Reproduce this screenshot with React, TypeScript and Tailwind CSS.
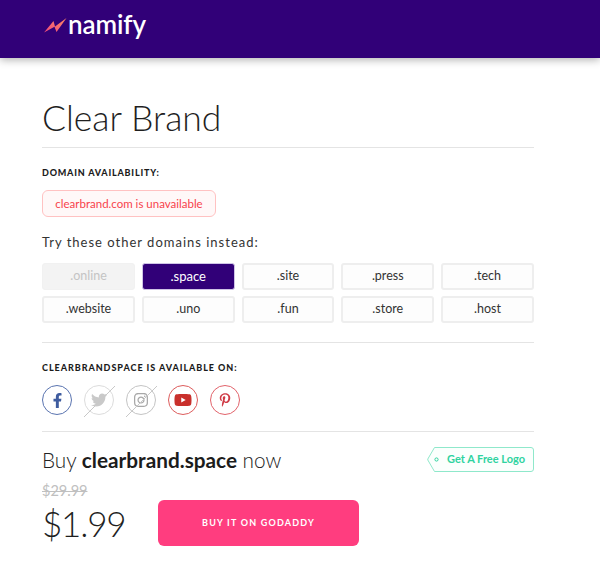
import { FaFacebookF, FaInstagram, FaPinterestP, FaTwitter, FaYoutube } from "react-icons/fa";

const domains = [".online", ".space", ".site", ".press", ".tech", ".website", ".uno", ".fun", ".store", ".host"];

const socials = [
  { name: "facebook", Icon: FaFacebookF, ring: "border-[#5a74b0]", color: "text-[#3f5c9f]", size: 15, taken: false },
  { name: "twitter", Icon: FaTwitter, ring: "border-[#dcdcdc]", color: "text-[#c9c9c9]", size: 16, taken: true },
  { name: "instagram", Icon: FaInstagram, ring: "border-[#c4c4c4]", color: "text-[#a8a8a8]", size: 16, taken: true },
  { name: "youtube", Icon: FaYoutube, ring: "border-[#dd5c5c]", color: "text-[#c9302c]", size: 18, taken: false },
  { name: "pinterest", Icon: FaPinterestP, ring: "border-[#e2636b]", color: "text-[#cf3a45]", size: 14, taken: false },
];

function Logo() {
  return (
    <div className="flex h-[48px] items-center pl-[44px]">
      <svg width="23" height="16" viewBox="0 0 23 16" className="mt-[2px]">
        <defs>
          <linearGradient id="bolt" x1="0" y1="1" x2="1" y2="0">
            <stop offset="0" stopColor="#f0497f" />
            <stop offset="1" stopColor="#fb8a62" />
          </linearGradient>
        </defs>
        <path d="M0 15.5 L9.5 4 L11 9.5 L22.5 1 L12.5 15 L10.5 9.8 Z" fill="url(#bolt)" />
      </svg>
      <span className="ml-[1px] font-['Lato',sans-serif] text-[26px] leading-none font-semibold tracking-[-0.1px] text-white">
        namify
      </span>
    </div>
  );
}

export default function App() {
  return (
    <div className="h-[565px] w-[600px] overflow-hidden bg-white font-['Lato',sans-serif] text-[#222]">
      <header className="h-[58px] bg-[#310078] shadow-[0_2px_8px_rgba(0,0,0,0.3)]">
        <Logo />
      </header>

      <main className="ml-[42px] w-[492px]">
        <h1 className="mt-[38px] h-[52px] border-b border-[#e4e4e4] text-[35.5px] leading-[44px] font-light text-[#1f1f1f]">
          Clear Brand
        </h1>

        <p className="mt-[19px] text-[9px] leading-[11px] font-black tracking-[0.8px] text-[#1c1c1c]">
          DOMAIN AVAILABILITY:
        </p>

        <div className="mt-[12px] flex h-[27px] w-[174px] items-center justify-center rounded-[6px] border border-[#ffc2c2] bg-[#fff8f8] text-[11.5px] text-[#f7434c]">
          clearbrand.com is unavailable
        </div>

        <p className="mt-[17px] text-[13px] leading-[16px] tracking-[1px] text-[#333]">
          Try these other domains instead:
        </p>

        <div className="mt-[13px] grid grid-cols-5 gap-x-[6.8px] gap-y-[6px]">
          {domains.map((d) => {
            if (d === ".online") {
              return (
                <div key={d} className="flex h-[27px] items-center justify-center rounded-[3px] border border-[#f1f1f1] bg-[#f3f3f3] text-[12.5px] text-[#c4c4c4]">
                  {d}
                </div>
              );
            }
            if (d === ".space") {
              return (
                <div key={d} className="flex h-[27px] items-center justify-center rounded-[3px] border border-[#cfc4e6] bg-[#310078] text-[13px] text-white">
                  {d}
                </div>
              );
            }
            return (
              <div key={d} className="flex h-[27px] items-center justify-center rounded-[3px] border-2 border-[#eeeeee] bg-[#fdfdfd] text-[12.5px] text-[#333]">
                {d}
              </div>
            );
          })}
        </div>

        <div className="mt-[19px] border-t border-[#e4e4e4]" />

        <p className="mt-[19px] text-[9px] leading-[11px] font-black tracking-[0.95px] text-[#1c1c1c]">
          CLEARBRANDSPACE IS AVAILABLE ON:
        </p>

        <div className="mt-[12px] flex gap-x-[12px]">
          {socials.map(({ name, Icon, ring, color, size, taken }) => (
            <div key={name} className={`relative flex h-[30px] w-[30px] items-center justify-center rounded-full border-[1.5px] ${ring} ${color}`}>
              <Icon size={size} />
              {taken && (
                <svg width="32" height="32" viewBox="0 0 32 32" className="absolute -top-px -left-px">
                  <line x1="0" y1="32" x2="31" y2="1" stroke="#c8c8c8" strokeWidth="1" />
                </svg>
              )}
            </div>
          ))}
        </div>

        <div className="mt-[16px] border-t border-[#e4e4e4]" />

        <div className="mt-[15px] flex items-start justify-between">
          <p className="mt-0 text-[20.75px] leading-[26px] font-light text-[#222]">
            Buy <span className="font-bold text-[#1c1c1c]">clearbrand.space</span> now
          </p>
          <div className="relative flex h-[25px] w-[107px] items-center justify-end pr-[9px] text-[11px] font-bold text-[#2fd3a0]">
            <svg width="107" height="25" viewBox="0 0 107 25" className="absolute top-0 left-0">
              <path
                d="M7.5 0.5 H104 a2.5 2.5 0 0 1 2.5 2.5 V22 a2.5 2.5 0 0 1 -2.5 2.5 H7.5 L0.8 13 V12 Z"
                fill="#fbfffd"
                stroke="#8fe8cb"
                strokeWidth="1"
              />
              <circle cx="9.5" cy="12.5" r="1.6" fill="none" stroke="#2fd3a0" strokeWidth="1" />
            </svg>
            <span className="relative">Get A Free Logo</span>
          </div>
        </div>

        <div className="mt-[3px] flex items-start">
          <div className="w-[116px]">
            <p className="mt-[7px] text-[14.5px] leading-[16px] text-[#c0c0c0] line-through">$29.99</p>
            <p className="mt-[2px] text-[35px] leading-[44px] font-light tracking-[-1.2px] text-[#1f1f1f]">$1.99</p>
          </div>
          <button className="mt-[24px] h-[46px] w-[201px] rounded-[6px] bg-[#ff3d7f] text-[9px] font-bold tracking-[1.2px] text-white">
            BUY IT ON GODADDY
          </button>
        </div>
      </main>
    </div>
  );
}
